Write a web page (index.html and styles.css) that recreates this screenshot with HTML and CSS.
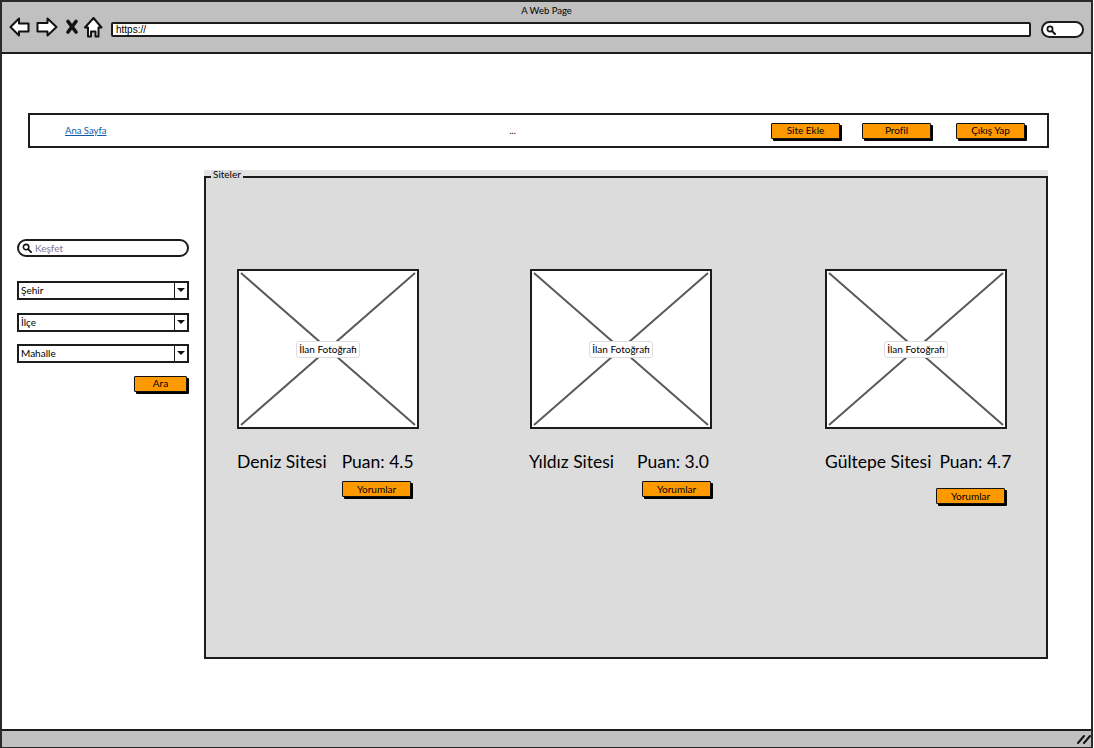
FILE: index.html
```html
<!DOCTYPE html>
<html lang="tr">
<head>
<meta charset="utf-8">
<title>A Web Page</title>
<link rel="stylesheet" href="styles.css">
</head>
<body>
<div class="window">
  <header class="chrome">
    <div class="chrome-title">A Web Page</div>
    <div class="chrome-row">
      <svg class="chrome-icons" width="98" height="22" viewBox="0 0 98 22">
        <path d="M1.5 10 L10 1.5 V6.5 H19.5 V14.5 H10 V18.5 Z" class="ico"/>
        <path d="M47.5 10 L38.5 1.5 V6 H28.5 V14.5 H38.5 V18.5 Z" class="ico"/>
        <path d="M59 4.5 L67 15 M67 4.5 L59 15" class="ico-x"/>
        <path d="M84.5 1 L92.5 10.5 H89.5 V19.5 H86.5 V14.5 H82 V19.5 H79 V10.5 H76 Z" class="ico"/>
      </svg>
      <div class="url">https://</div>
      <div class="chrome-search">
        <svg width="10" height="10" viewBox="0 0 10 10"><circle cx="4" cy="4" r="2.6" class="lens"/><path d="M6 6 L9 9" class="lens-h"/></svg>
      </div>
    </div>
  </header>

  <main class="page">
    <nav class="nav">
      <a class="nav-link" href="#">Ana Sayfa</a>
      <span class="nav-dots">...</span>
      <div class="nav-buttons">
        <button class="btn">Site Ekle</button>
        <button class="btn">Profil</button>
        <button class="btn">Çıkış Yap</button>
      </div>
    </nav>

    <div class="content">
      <aside class="side">
        <div class="search">
          <svg width="10" height="10" viewBox="0 0 11 11"><circle cx="4.5" cy="4.5" r="3" class="lens"/><path d="M6.8 6.8 L10 10" class="lens-h"/></svg>
          <span>Keşfet</span>
        </div>
        <div class="select"><span class="select-text">Şehir</span><span class="select-arrow"></span></div>
        <div class="select"><span class="select-text">İlçe</span><span class="select-arrow"></span></div>
        <div class="select"><span class="select-text">Mahalle</span><span class="select-arrow"></span></div>
        <button class="btn btn-ara">Ara</button>
      </aside>

      <section class="group">
        <div class="legend">Siteler</div>
        <div class="group-box">
          <article class="card">
            <div class="photo">
              <svg class="photo-x" viewBox="0 0 178 156" preserveAspectRatio="none"><path d="M2 2 L176 154 M176 2 L2 154"/></svg>
              <span class="photo-label">İlan Fotoğrafı</span>
            </div>
            <div class="card-title"><span>Deniz Sitesi</span><span>Puan: 4.5</span></div>
            <button class="btn btn-card-a">Yorumlar</button>
          </article>
          <article class="card">
            <div class="photo">
              <svg class="photo-x" viewBox="0 0 178 156" preserveAspectRatio="none"><path d="M2 2 L176 154 M176 2 L2 154"/></svg>
              <span class="photo-label">İlan Fotoğrafı</span>
            </div>
            <div class="card-title title-b"><span>Yıldız Sitesi</span><span>Puan: 3.0</span></div>
            <button class="btn btn-card-b">Yorumlar</button>
          </article>
          <article class="card">
            <div class="photo">
              <svg class="photo-x" viewBox="0 0 178 156" preserveAspectRatio="none"><path d="M2 2 L176 154 M176 2 L2 154"/></svg>
              <span class="photo-label">İlan Fotoğrafı</span>
            </div>
            <div class="card-title title-c"><span>Gültepe Sitesi</span><span>Puan: 4.7</span></div>
            <button class="btn btn-card-c">Yorumlar</button>
          </article>
        </div>
      </section>
    </div>
  </main>

  <footer class="status">
    <svg width="14" height="12" viewBox="0 0 14 12"><path d="M1 10 L7 3 M7 10 L13 3" class="grip"/></svg>
  </footer>
</div>
</body>
</html>
```

FILE: styles.css
```css
* { box-sizing: border-box; }
html, body { margin: 0; padding: 0; }
body {
  width: 1094px;
  height: 748px;
  overflow: hidden;
  background: #fff;
  color: #000;
  font-family: "Lato", "Noto Sans", sans-serif;
}
.window {
  width: 1093px;
  height: 748px;
  display: flex;
  flex-direction: column;
  border: 2px solid #2a2a2a;
  border-bottom-width: 1px;
  border-top-width: 2px;
}
.chrome {
  height: 52px;
  flex: none;
  background: #c0c0c0;
  border-bottom: 2px solid #1c1c1c;
}
.chrome-title {
  height: 16px;
  padding-top: 3px;
  text-align: center;
  font-size: 9.5px;
  line-height: 12px;
}
.chrome-row {
  display: flex;
  align-items: flex-start;
  padding-left: 7px;
}
.chrome-icons { flex: none; margin-right: 4px; margin-top: -1px; }
.ico { fill: #fff; stroke: #111; stroke-width: 2; stroke-linejoin: round; }
.ico-x { fill: none; stroke: #111; stroke-width: 3.6; stroke-linecap: round; }
.url {
  width: 920px;
  height: 15px;
  margin-top: 4px;
  background: #fff;
  border: 2px solid #1c1c1c;
  border-radius: 2px;
  font-family: "Liberation Sans", sans-serif;
  font-size: 10px;
  line-height: 11px;
  padding-left: 3px;
}
.chrome-search {
  width: 43px;
  height: 17px;
  margin-top: 3px;
  margin-left: 10px;
  background: #fff;
  border: 2px solid #1c1c1c;
  border-radius: 9px;
  padding: 2px 0 0 3px;
  display: flex;
}
.lens { fill: none; stroke: #111; stroke-width: 1.7; }
.lens-h { fill: none; stroke: #111; stroke-width: 2; stroke-linecap: round; }

.page { flex: 1; min-height: 0; padding-top: 59px; }
.nav {
  width: 1021px;
  height: 35px;
  margin-left: 26px;
  border: 2px solid #1c1c1c;
  display: flex;
  align-items: center;
  background: #fff;
}
.nav-link {
  margin-left: 35px;
  margin-top: -1px;
  font-size: 9.5px;
  color: #0b5cad;
  text-decoration: underline;
}
.nav-dots { margin-left: 403px; font-size: 9px; }
.nav-buttons { margin-left: auto; margin-right: 22px; display: flex; gap: 22px; }
.nav-buttons .btn:last-child { margin-left: 3px; }

.btn {
  display: block;
  width: 69px;
  height: 16px;
  padding: 0;
  background: #ff9900;
  border: 1.5px solid #111;
  border-radius: 1px;
  box-shadow: 2px 2px 0 #000;
  font-family: inherit;
  font-size: 10px;
  line-height: 13px;
  color: #000;
}

.content { display: flex; margin-top: 22px; padding-left: 15px; }
.side { width: 172px; flex: none; padding-top: 69px; }
.search {
  height: 18px;
  border: 2px solid #1c1c1c;
  border-radius: 9px;
  display: flex;
  align-items: center;
  gap: 3px;
  padding-left: 3px;
  font-size: 10px;
  color: #7f7596;
  margin-bottom: 24px;
}
.select {
  height: 19px;
  display: flex;
  border: 2px solid #1c1c1c;
  background: #fff;
  margin-bottom: 12.5px;
}
.select-text { flex: 1; font-size: 10px; line-height: 15px; padding-left: 2px; }
.select-arrow {
  width: 13px;
  border-left: 1.5px solid #1c1c1c;
  position: relative;
}
.select-arrow::after {
  content: "";
  position: absolute;
  left: 2px;
  top: 5px;
  border: 4px solid transparent;
  border-top: 4px solid #111;
  border-bottom: 0;
}
.btn-ara { width: 53px; margin-left: 117px; margin-top: 1px; }

.group {
  margin-left: 15px;
  width: 844px;
  position: relative;
  padding-top: 6px;
  background: linear-gradient(#e4e4e4, #e4e4e4) top / 100% 6px no-repeat;
}
.legend {
  position: absolute;
  left: 7px;
  top: 0;
  padding: 0 2px;
  background: #ddd;
  font-size: 10px;
  line-height: 9px;
  height: 8px;
}
.group-box {
  height: 483px;
  background: #dcdcdc;
  border: 2px solid #1c1c1c;
  padding: 91px 0 0 31px;
  display: grid;
  grid-template-columns: 293px 295px 182px;
  align-items: start;
}
.card { display: flex; flex-direction: column; width: 182px; }
.photo {
  width: 182px;
  height: 160px;
  background: #fff;
  border: 2px solid #1c1c1c;
  display: flex;
  align-items: center;
  justify-content: center;
  position: relative;
}
.photo-x { position: absolute; inset: 0; width: 100%; height: 100%; }
.photo-x path { fill: none; stroke: #5a5a5a; stroke-width: 2; vector-effect: non-scaling-stroke; }
.photo-label {
  position: relative;
  background: #fff;
  border: 1px solid #ddd;
  border-radius: 3px;
  font-size: 10px;
  line-height: 13px;
  padding: 1px 2px;
}
.card-title {
  display: flex;
  gap: 15px;
  margin-top: 23px;
  font-size: 17.5px;
  line-height: 20px;
  white-space: nowrap;
}
.title-b { gap: 23px; margin-left: -1px; }
.title-c { gap: 8px; }
.btn-card-a { margin: 9px 0 0 105px; }
.btn-card-b { margin: 9px 0 0 112px; }
.btn-card-c { margin: 16px 0 0 111px; }

.status {
  margin-top: auto;
  height: 18px;
  flex: none;
  background: #c0c0c0;
  border-top: 2px solid #1c1c1c;
  display: flex;
  justify-content: flex-end;
  align-items: center;
}
.grip { fill: none; stroke: #111; stroke-width: 2; stroke-linecap: round; }
```
